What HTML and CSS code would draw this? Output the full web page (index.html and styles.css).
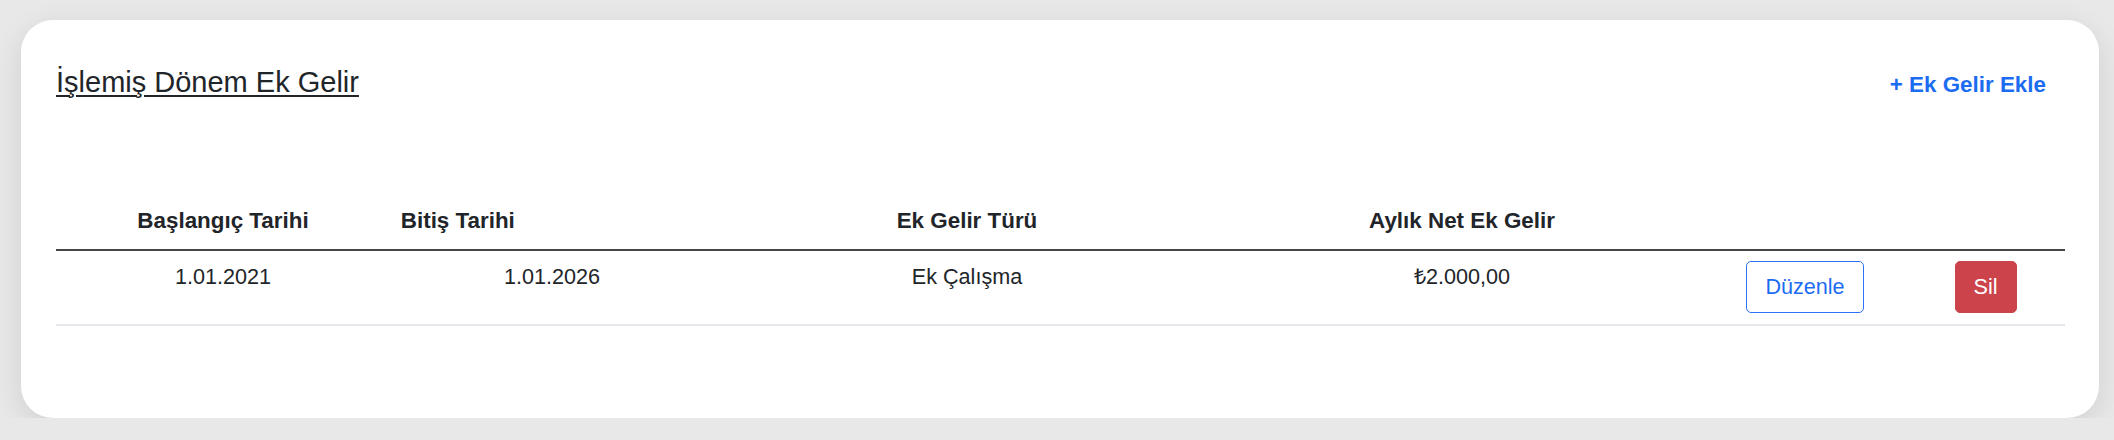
FILE: index.html
```html
<!DOCTYPE html>
<html lang="tr">
    <head>
        <meta charset="UTF-8">
        <meta name="viewport" content="width=device-width, initial-scale=1.0">
        <title>İşlemiş Dönem Ek Gelir</title>
        <link rel="stylesheet" href="styles.css">
    </head>
    <body>

    <div class="card">
        <div class="card-head">
            <h2 class="card-title">İşlemiş Dönem Ek Gelir</h2>
            <a class="add-link" href="#">+ Ek Gelir Ekle</a>
        </div>

        <table class="income-table">
            <colgroup>
                <col class="c-start">
                <col class="c-end">
                <col class="c-type">
                <col class="c-amount">
                <col class="c-edit">
                <col class="c-delete">
            </colgroup>
            <thead>
                <tr>
                    <th>Başlangıç Tarihi</th>
                    <th class="left">Bitiş Tarihi</th>
                    <th>Ek Gelir Türü</th>
                    <th>Aylık Net Ek Gelir</th>
                    <th></th>
                    <th></th>
                </tr>
            </thead>
            <tbody>
                <tr>
                    <td>1.01.2021</td>
                    <td>1.01.2026</td>
                    <td>Ek Çalışma</td>
                    <td>₺2.000,00</td>
                    <td><button class="btn btn-edit">Düzenle</button></td>
                    <td><button class="btn btn-delete">Sil</button></td>
                </tr>
            </tbody>
        </table>
    </div>

    </body>
</html>
```

FILE: styles.css
```css
* {
    box-sizing: border-box;
    margin: 0;
    padding: 0;
}
body {
    background-color: #e8e8e8;
    font-family: "Liberation Sans", Arial, sans-serif;
    font-size: 21.6px;
    line-height: 1.5;
    color: #212529;
}
.card {
    margin: 20px 15px 0 21px;
    padding: 45px 34px 92px 35px;
    background-color: #fff;
    border-radius: 32px;
    box-shadow: 0 8px 30px rgba(0, 0, 0, 0.1);
}
.card-head {
    display: flex;
    justify-content: space-between;
    align-items: baseline;
}
.card-title {
    font-size: 29px;
    font-weight: normal;
    line-height: 1.2;
    text-decoration: underline;
    text-underline-offset: 3px;
    text-decoration-thickness: 2px;
}
.add-link {
    padding: 0 19px;
    color: #1c6cf2;
    font-size: 22.4px;
    font-weight: bold;
    text-decoration: none;
}
.income-table {
    width: 100%;
    margin-top: 93px;
    border-collapse: collapse;
    table-layout: fixed;
}
.c-start { width: 334px; }
.c-end { width: 324px; }
.c-type { width: 506px; }
.c-amount { width: 484px; }
.c-edit { width: 202px; }
.c-delete { width: 159px; }
.income-table th,
.income-table td {
    padding: 10.8px;
    text-align: center;
    vertical-align: top;
}
.income-table th {
    font-size: 22.4px;
    line-height: 32.4px;
    font-weight: bold;
    border-bottom: 2px solid #454545;
}
.income-table th.left {
    text-align: left;
}
.income-table td {
    border-bottom: 2px solid #e4e7eb;
}
.btn {
    font-family: inherit;
    font-size: 21.6px;
    line-height: 1.5;
    padding: 8.8px 18px;
    border-width: 1.5px;
    border-style: solid;
    border-radius: 5px;
    cursor: pointer;
}
.btn-edit {
    background-color: #fff;
    border-color: #2f72f5;
    color: #1c6cf2;
}
.btn-delete {
    background-color: #cc434b;
    border-color: #c9434b;
    color: #fff;
}
```
